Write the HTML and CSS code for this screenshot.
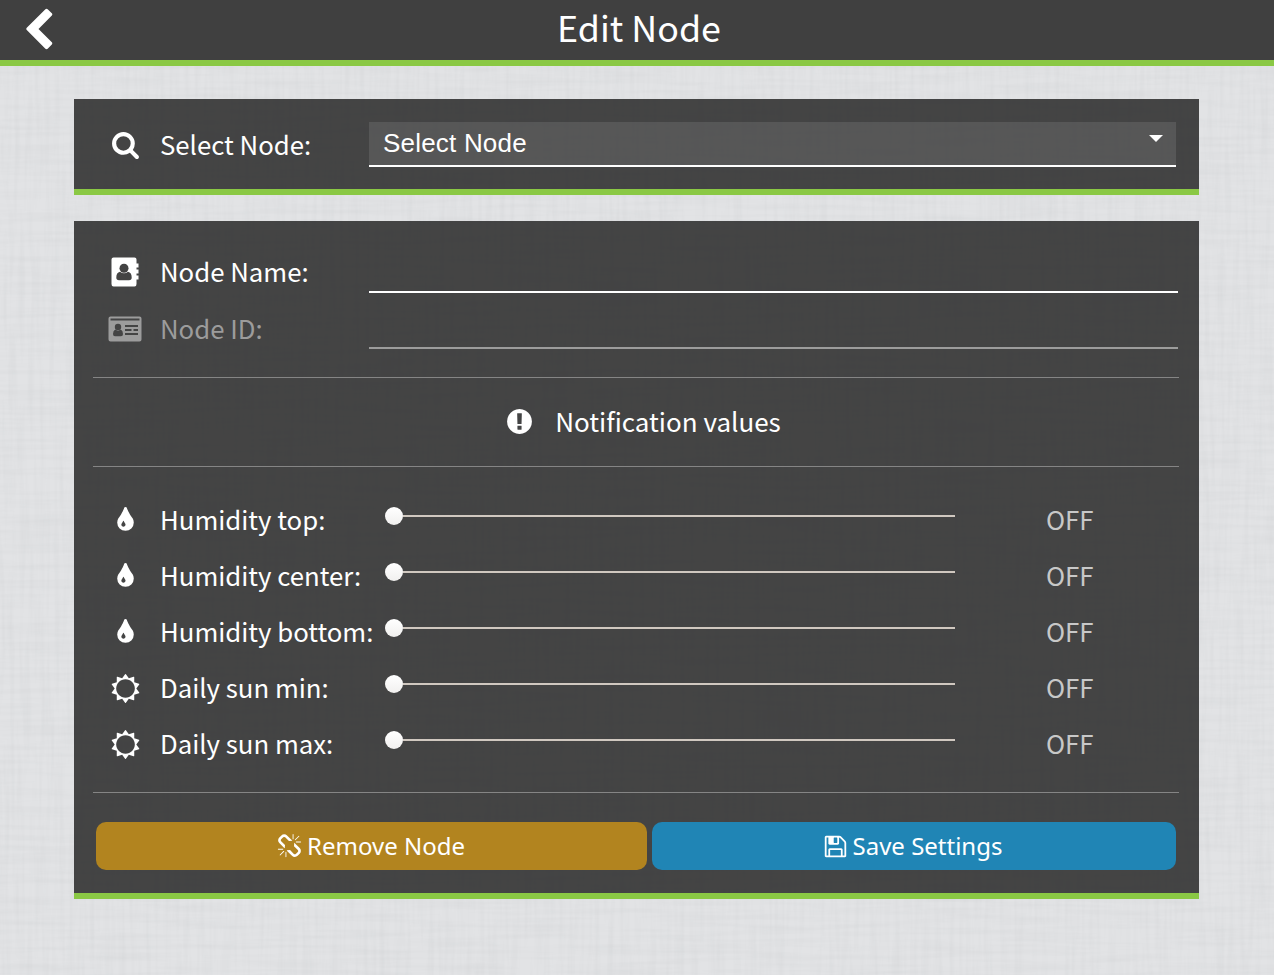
FILE: index.html
```html
<!DOCTYPE html>
<html lang="en">
<head>
<meta charset="utf-8">
<title>Edit Node</title>
<link rel="stylesheet" href="styles.css">
</head>
<body>
<svg class="linen" aria-hidden="true">
  <filter id="warp" x="0" y="0" width="100%" height="100%"><feTurbulence type="fractalNoise" baseFrequency="0.2 0.012" numOctaves="2" seed="4"/><feColorMatrix values="0 0 0 0 0.35  0 0 0 0 0.37  0 0 0 0 0.38  0.16 0 0 0 -0.062"/></filter>
  <filter id="weft" x="0" y="0" width="100%" height="100%"><feTurbulence type="fractalNoise" baseFrequency="0.012 0.2" numOctaves="2" seed="9"/><feColorMatrix values="0 0 0 0 0.35  0 0 0 0 0.37  0 0 0 0 0.38  0.16 0 0 0 -0.062"/></filter>
  <rect width="100%" height="100%" filter="url(#warp)"/>
  <rect width="100%" height="100%" filter="url(#weft)"/>
</svg>
<svg class="defs" aria-hidden="true">
  <symbol id="i-drop" viewBox="0 0 1792 1792"><path d="M896 1152q0-36-20-69-1-1-15.5-22.5t-25.5-38-25-44-21-50.5q-4-16-21-16t-21 16q-7 23-21 50.5t-25 44-25.5 38-15.5 22.5q-20 33-20 69 0 53 37.5 90.5t90.5 37.5 90.5-37.5 37.5-90.5zm512-128q0 212-150 362t-362 150-362-150-150-362q0-145 81-275 6-9 62.5-90.5t101-151 99.5-178 83-201.5q9-30 34-47t51-17 51.5 17 33.5 47q28 93 83 201.5t99.5 178 101 151 62.5 90.5q81 127 81 275z"/></symbol>
  <symbol id="i-sun" viewBox="0 0 1792 1792"><path d="M1472 896q0-117-45.5-223.5t-123-184-184-123-223.5-45.5-223.5 45.5-184 123-123 184-45.5 223.5 45.5 223.5 123 184 184 123 223.5 45.5 223.5-45.5 184-123 123-184 45.5-223.5zm276 277q-4 15-20 20l-292 96v306q0 16-13 26-15 10-29 4l-292-94-180 248q-10 13-26 13t-26-13l-180-248-292 94q-14 6-29-4-13-10-13-26v-306l-292-96q-16-5-20-20-5-17 4-29l180-248-180-248q-9-13-4-29 4-15 20-20l292-96v-306q0-16 13-26 15-10 29-4l292 94 180-248q9-12 26-12t26 12l180 248 292-94q14-6 29 4 13 10 13 26v306l292 96q16 5 20 20 5 16-4 29l-180 248 180 248q9 12 4 29z"/></symbol>
</svg>
<div class="page">
<header class="topbar">
  <svg class="icon back" viewBox="0 0 1792 1792"><path d="M1427 301l-531 531 531 531q19 19 19 45t-19 45l-166 166q-19 19-45 19t-45-19l-742-742q-19-19-19-45t19-45l742-742q19-19 45-19t45 19l166 166q19 19 19 45t-19 45z"/></svg>
  <h1 class="title">Edit Node</h1>
</header>
<main class="content">
  <section class="panel panel-select">
    <div class="row">
      <svg class="icon" viewBox="0 0 1792 1792"><path d="M1216 832q0-185-131.5-316.5t-316.5-131.5-316.5 131.5-131.5 316.5 131.5 316.5 316.5 131.5 316.5-131.5 131.5-316.5zm512 832q0 52-38 90t-90 38q-54 0-90-38l-343-342q-179 124-399 124-143 0-273.5-55.5t-225-150-150-225-55.5-273.5 55.5-273.5 150-225 225-150 273.5-55.5 273.5 55.5 225 150 150 225 55.5 273.5q0 220-124 399l343 343q37 37 37 90z"/></svg>
      <span class="label">Select Node:</span>
      <div class="select"><span>Select Node</span><svg class="caret" viewBox="0 0 14 7"><path d="M0 0H14L7 7Z"/></svg></div>
    </div>
  </section>
  <section class="panel panel-form">
    <div class="row field-row">
      <svg class="icon icon-book" viewBox="0 0 28 30"><path fill-rule="evenodd" d="M2.5.5H23.5Q25.500.5 25.500 2.500V6.500H27.500V10.500H25.500V12.500H27.500V16.500H25.500V18.500H27.500V22.500H25.500V27Q25.500 29.500 23.500 29.500H2.500Q.5 29.500.5 27V2.500Q.5.5 2.500.5ZM9 14.700Q5.300 15.500 5.300 20.500 5.300 23.300 8 23.300H18Q20.700 23.300 20.700 20.500 20.700 15.500 17 14.700 13 18 9 14.700Z"/><circle class="cut" cx="13" cy="11.200" r="4.500"/></svg>
      <span class="label">Node Name:</span><div class="input"></div>
    </div>
    <div class="row field-row disabled">
      <svg class="icon icon-card" viewBox="0 0 34 26"><path fill-rule="evenodd" d="M2.500.5H31.500Q33.500.5 33.500 2.500V23.500Q33.500 25.500 31.500 25.500H2.500Q.5 25.500.5 23.500V2.500Q.5.5 2.500.5ZM2.500 2.500V4.500H31.500V2.500ZM7.200 13.500Q5 14.500 5 18 5 20.300 7 20.300H13Q15 20.300 15 18 15 14.500 12.800 13.500 10 15.800 7.200 13.500ZM17 9V11H30V9ZM17 13V15H23.500V13ZM25.500 13V15H30V13ZM17 17V19H30V17Z"/><circle class="cut" cx="10" cy="11" r="3.200"/></svg>
      <span class="label">Node ID:</span><div class="input"></div>
    </div>
    <h2 class="section-title">
      <svg class="icon" viewBox="0 0 1792 1792"><path d="M896 128q209 0 385.500 103t279.500 279.500 103 385.500-103 385.500-279.500 279.500-385.500 103-385.500-103-279.500-279.500-103-385.500 103-385.500 279.500-279.500 385.500-103zm128 1247v-190q0-14-9-23.500t-22-9.500h-192q-13 0-23 10t-10 23v190q0 13 10 23t23 10h192q13 0 22-9.500t9-23.500zm-2-344l18-621q0-12-10-18-10-8-24-8h-220q-14 0-24 8-10 6-10 18l17 621q0 10 10 17.500t24 7.500h185q14 0 23.500-7.500t10.500-17.500z"/></svg>
      <span>Notification values</span>
    </h2>
    <div class="sliders">
      <div class="row"><svg class="icon"><use href="#i-drop"/></svg><span class="label">Humidity top:</span><div class="slider"><i class="thumb"></i><i class="track"></i></div><span class="value">OFF</span></div>
      <div class="row"><svg class="icon"><use href="#i-drop"/></svg><span class="label">Humidity center:</span><div class="slider"><i class="thumb"></i><i class="track"></i></div><span class="value">OFF</span></div>
      <div class="row"><svg class="icon"><use href="#i-drop"/></svg><span class="label">Humidity bottom:</span><div class="slider"><i class="thumb"></i><i class="track"></i></div><span class="value">OFF</span></div>
      <div class="row"><svg class="icon"><use href="#i-sun"/></svg><span class="label">Daily sun min:</span><div class="slider"><i class="thumb"></i><i class="track"></i></div><span class="value">OFF</span></div>
      <div class="row"><svg class="icon"><use href="#i-sun"/></svg><span class="label">Daily sun max:</span><div class="slider"><i class="thumb"></i><i class="track"></i></div><span class="value">OFF</span></div>
    </div>
    <div class="actions">
      <button class="btn remove"><svg viewBox="0 0 1792 1792"><path d="M503 1271l-256 256q-10 9-23 9-12 0-23-9-9-10-9-23t9-23l256-256q10-9 23-9t23 9q9 10 9 23t-9 23zm169 41v320q0 14-9 23t-23 9-23-9-9-23v-320q0-14 9-23t23-9 23 9 9 23zm-224-224q0 14-9 23t-23 9h-320q-14 0-23-9t-9-23 9-23 23-9h320q14 0 23 9t9 23zm1264 128q0 120-85 203l-147 146q-83 83-203 83-121 0-204-85l-334-335q-21-21-42-56l239-18 273 274q27 27 68 27.500t68-26.500l147-146q28-28 28-67 0-40-28-68l-274-275 18-239q35 21 56 42l336 336q84 86 84 204zm-617-724l-239 18-273-274q-28-28-68-28-39 0-68 27l-147 146q-28 28-28 67 0 40 28 68l274 274-18 240q-35-21-56-42l-336-336q-84-86-84-204 0-120 85-203l147-146q83-83 203-83 121 0 204 85l334 335q21 21 42 56zm633 84q0 14-9 23t-23 9h-320q-14 0-23-9t-9-23 9-23 23-9h320q14 0 23 9t9 23zm-544-544v320q0 14-9 23t-23 9-23-9-9-23v-320q0-14 9-23t23-9 23 9 9 23zm407 151l-256 256q-11 9-23 9t-23-9q-9-10-9-23t9-23l256-256q10-9 23-9t23 9q9 10 9 23t-9 23z"/></svg><span>Remove Node</span></button>
      <button class="btn save"><svg viewBox="0 0 1792 1792"><path d="M512 1536h768v-384h-768v384zm896 0h128v-896q0-14-10-38.500t-20-34.500l-281-281q-10-10-34-20t-39-10v416q0 40-28 68t-68 28h-576q-40 0-68-28t-28-68v-416h-128v1280h128v-416q0-40 28-68t68-28h832q40 0 68 28t28 68v416zm-384-928v-320q0-13-9.500-22.500t-22.500-9.500h-192q-13 0-22.500 9.500t-9.500 22.500v320q0 13 9.500 22.500t22.500 9.500h192q13 0 22.500-9.500t9.500-22.500zm640 32v928q0 40-28 68t-68 28h-1344q-40 0-68-28t-28-68v-1344q0-40 28-68t68-28h928q40 0 88 20t76 48l280 280q28 28 48 76t20 88z"/></svg><span>Save Settings</span></button>
    </div>
  </section>
</main>
</div>
</body>
</html>
```
FILE: styles.css
```css
* { box-sizing: border-box; }
body {
  margin: 0;
  height: 975px;
  overflow: hidden;
  background: #e2e3e5;
  color: #fff;
  font-family: "Noto Sans CJK SC", "Noto Sans", sans-serif;
}
.linen { position: absolute; inset: 0; width: 100%; height: 100%; }
.defs { position: absolute; width: 0; height: 0; }
.page { position: relative; }
.topbar {
  display: grid;
  grid-template-columns: 76px 1fr 72px;
  align-items: center;
  height: 66px;
  background: #404040;
  border-bottom: 6px solid #8ac844;
}
.icon { fill: currentColor; width: 29px; height: 29px; justify-self: center; }
.topbar .back { width: 45px; height: 45px; }
.title {
  margin: 0 0 8px;
  text-align: center;
  font-size: 35.8px;
  line-height: 52px;
  font-weight: 400;
}
.content { display: grid; gap: 26px; padding: 33px 75px 0 74px; }
.panel { background: rgba(57, 57, 57, .94); border-bottom: 6px solid #8ac844; }
.panel-select { height: 96px; padding: 23px 23px 0 19px; }
.row { display: grid; grid-template-columns: 64px 212px 1fr; align-items: center; }
.label {
  padding-left: 3px;
  font-size: 25.75px;
  line-height: 40px;
  white-space: nowrap;
}
.panel-select .label { padding-bottom: 2px; }
.select {
  display: flex;
  align-items: flex-start;
  justify-content: space-between;
  height: 45px;
  padding: 6px 13px 0 14px;
  background: rgba(255, 255, 255, .1);
  border-bottom: 2px solid #fff;
  font: 26px/30px "Liberation Sans", Arial, sans-serif;
  letter-spacing: .2px;
}
.caret { width: 14px; height: 7px; margin-top: 7px; fill: #fff; }
.panel-form { height: 678px; padding: 16px 20px 0 19px; }
.field-row { height: 56px; padding-right: 1px; }
.field-row .label { padding-top: 11px; }
.input { align-self: end; height: 40px; border-bottom: 2px solid currentColor; }
.disabled { color: #9c9c9c; }
.disabled .label { padding-top: 13px; }
.cut { fill: #434343; }
.icon-book { width: 28px; height: 30px; margin: 13px 0 0; }
.icon-card { width: 34px; height: 26px; margin-top: 15px; }
.section-title {
  display: flex;
  align-items: center;
  justify-content: center;
  gap: 21px;
  height: 90px;
  margin: 28px 0 0;
  padding: 0 0 2px 14px;
  border: solid #858585;
  border-width: 1px 0;
  font-size: 26px;
  line-height: 40px;
  font-weight: 400;
}
.section-title span { padding-bottom: 1px; }
.sliders { padding: 21px 0 24px; border-bottom: 1px solid #858585; }
.sliders .row { grid-template-columns: 64px 228px 570px 1fr; height: 56px; }
.sliders .icon { margin-top: 8px; }
.sliders .label { padding-top: 6px; }
.slider { display: flex; align-items: center; }
.thumb {
  width: 18px;
  height: 18px;
  border-radius: 50%;
  background: linear-gradient(#fff, #f1f0ef);
}
.track { flex: 1; height: 2px; background: #d0c8c0; }
.value {
  padding: 5px 0 0 91px;
  color: #c8c8c8;
  font-size: 25.75px;
  line-height: 40px;
}
.actions {
  display: grid;
  grid-template-columns: 551px 524px;
  gap: 5px;
  padding: 29px 0 0 3px;
}
.btn {
  display: flex;
  align-items: center;
  justify-content: center;
  gap: 5px;
  height: 48px;
  padding: 0 7px 0 6px;
  border: 0;
  border-radius: 10px;
  color: #fff;
  font: 24px/34px "Noto Sans", sans-serif;
}
.btn svg { width: 25px; height: 25px; fill: #fff; }
.remove { background: #b2841f; }
.save { padding-right: 9px; background: #2085b5; }
```
